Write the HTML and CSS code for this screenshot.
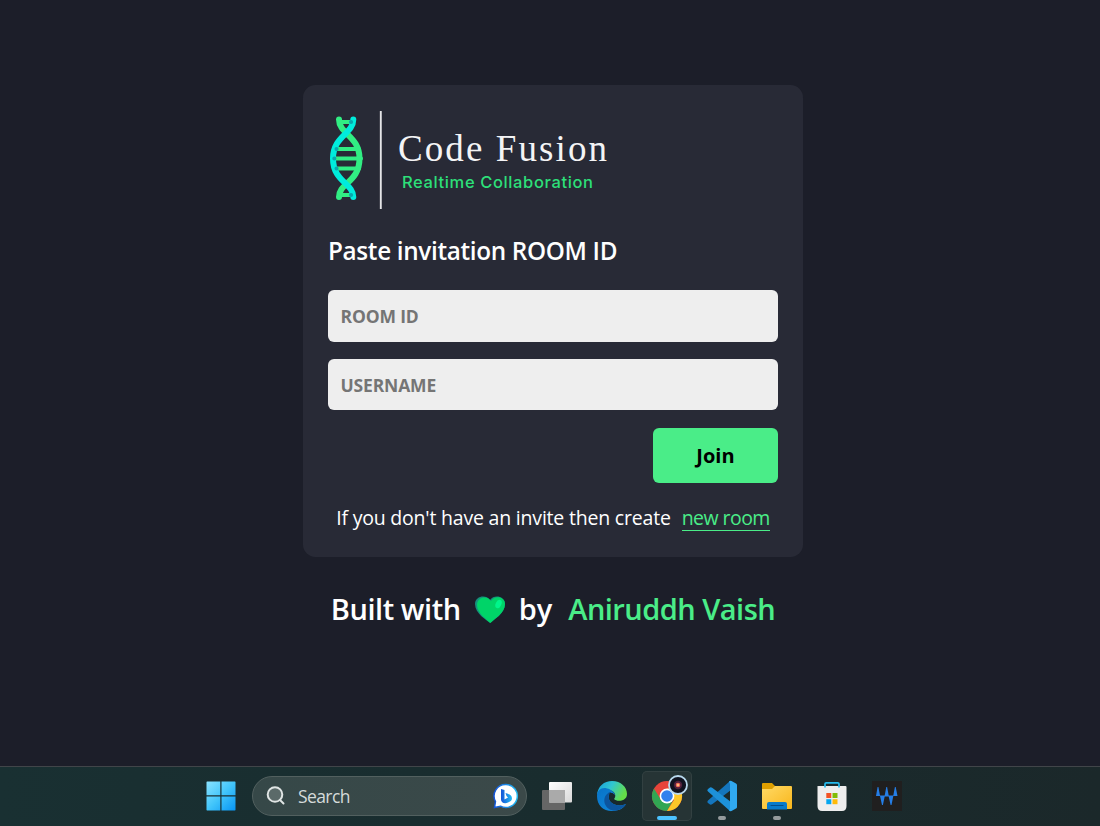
FILE: index.html
```html
<!DOCTYPE html>
<html lang="en">
<head>
<meta charset="utf-8">
<title>Code Fusion</title>
<link rel="stylesheet" href="styles.css">
</head>
<body>
<main class="home">
  <section class="card">
    <svg class="logo" width="300" height="100" viewBox="0 0 300 100" role="img" aria-label="Code Fusion Realtime Collaboration">
      <g fill="none" stroke-linecap="round">
        <path d="M12 12H25M8 39H31M6 48.500H33M8 58.500H31M12 85H25" stroke="#31ee83" stroke-width="4"/>
        <path d="M11 9.500C11 24 31.500 26 31.500 48.500C31.500 72 11 73 11 87" stroke="#31ee83" stroke-width="6"/>
        <path d="M25.300 9.500C25.300 24 5 26 5 48.500C5 72 25.300 73 25.300 87" stroke="#00ecdc" stroke-width="6"/>
        <path d="M23 12h.1M8.500 39h.1M6.300 48.500h.1M8.500 58.500h.1M23 85h.1" stroke="#08a7ad" stroke-width="4"/>
      </g>
      <path d="M52.800 1V99" stroke="#e4e5e7" stroke-width="1.900"/>
      <text class="logo-name" x="70" y="51" textLength="209">Code Fusion</text>
      <text class="logo-tag" x="74" y="78" textLength="191">Realtime Collaboration</text>
    </svg>
    <h4 class="label">Paste invitation ROOM ID</h4>
    <div class="fields">
      <input class="field" type="text" placeholder="ROOM ID">
      <input class="field" type="text" placeholder="USERNAME">
      <button class="join">Join</button>
      <p class="create"><span>If you don't have an invite then create</span><a class="new-room">new room</a></p>
    </div>
  </section>
  <footer class="credit">
    <span class="built">Built with</span>
    <svg class="heart" width="30" height="28" viewBox="0 0 30 28"><path d="M15 27C12 24 0 18 0 8C0 0 11-2 15 4C19-2 30 0 30 8C30 18 18 24 15 27Z" fill="#168f7c"/><path d="M15.500 27C12 24 2 17 2 9C2 1 12-1 16 5C19-1 30 0 30 8C30 17 19 23 15.500 27Z" fill="#00d468"/><ellipse cx="23.500" cy="8" rx="2.800" ry="4.500" transform="rotate(25 23.500 8)" fill="#00f58b"/></svg>
    <span class="by">by</span>
    <a class="author">Aniruddh Vaish</a>
  </footer>
</main>
<nav class="taskbar">
  <svg class="start" width="30" height="30" viewBox="0 0 30 30"><defs><linearGradient id="win" x2="1" y2="1"><stop stop-color="#8ae3ff"/><stop offset=".5" stop-color="#42c5fa"/><stop offset="1" stop-color="#0795f5"/></linearGradient></defs><path d="M1 .5H14.300V14.300H.5V1ZM15.500 .5H29L29.500 1V14.300H15.500ZM.5 15.500H14.300V29.500H1L.5 29ZM15.500 15.500H29.500V29L29 29.500H15.500Z" fill="url(#win)"/></svg>
  <div class="search">
    <svg width="20" height="20" viewBox="0 0 20 20" fill="none" stroke="#e0e5e4" stroke-width="2" stroke-linecap="round"><circle cx="9" cy="8.500" r="7.300" fill="#5b6a69"/><path d="M14 14L17.500 17.500"/></svg>
    <span class="search-text">Search</span>
    <svg class="bing" width="26" height="26" viewBox="0 0 26 26"><defs><linearGradient id="bing" x2="1"><stop stop-color="#1454d8"/><stop offset="1" stop-color="#22baf2"/></linearGradient></defs><path d="M13 1.500A11.500 11.500 0 1 1 7.500 23.200L1.500 24.500L2.500 18.500A11.500 11.500 0 0 1 13 1.500Z" fill="#fff" stroke="url(#bing)" stroke-width="1.500"/><path d="M8 6L11.500 7V16.500L15 14.500L13.500 13L12.500 10C16 11 19 12.500 19 15.500C19 18 17 18.500 15 19.500C12 21 8 20 8 16.500Z" fill="url(#bing)"/></svg>
  </div>
  <svg class="app" width="50" height="50" viewBox="0 0 50 50"><defs><linearGradient id="pane" x2="1" y2="1"><stop stop-color="#fff"/><stop offset="1" stop-color="#d8d8d8"/></linearGradient></defs><rect x="10" y="19" width="23" height="20" rx="1" fill="#666"/><rect x="17" y="11" width="23" height="20.500" rx="1" fill="url(#pane)"/><path d="M17 19H33V31.500H17Z" fill="#aaa"/></svg>
  <svg class="app" width="50" height="50" viewBox="0 0 50 50"><defs><linearGradient id="edgeTop" x1="0" x2="1" y2=".4"><stop stop-color="#159ddd"/><stop offset=".5" stop-color="#31c5d0"/><stop offset="1" stop-color="#64de48"/></linearGradient><linearGradient id="edgeLow" y2="1"><stop stop-color="#0873c8"/><stop offset="1" stop-color="#118bdc"/></linearGradient></defs><path d="M10 24C11 15 17 10 25 10C34 10 40 16 40 23C40 31 29 31 27 28C29 26 29 22 25 20C19 16 12 19 10 24Z" fill="url(#edgeTop)"/><path d="M10 25C10 19 15 16 20 17.500C24 18 28 22 28 24C24 20 21 24 22 28C24 34 33 36 39 33C36 38 31 40 25 40C16 40 10 34 10 25Z" fill="url(#edgeLow)"/><path d="M23 21C14 25 16 38 27 39.800C32 39.500 37 37 39 33C33 36 24 34 22 28C21 25 22 23 24 21.700Z" fill="#0c559e"/><path d="M23 21.800C26 21 28 24 26.500 28C29 31 35 31 39 28L38.500 32C31 35 24 33 22.500 28C21.800 25 22 23 23 21.800Z" fill="#18292d"/></svg>
  <div class="app active">
    <svg width="50" height="50" viewBox="0 0 50 50"><circle cx="25" cy="25" r="15" fill="#e8443a"/><path d="M12 17.500A15 15 0 0 0 25 40L31.500 28.500L19 29Z" fill="#31a653"/><path d="M25 40A15 15 0 0 0 38 17.500H25L32 29Z" fill="#fbc728"/><circle cx="25" cy="25" r="7.400" fill="#fff"/><circle cx="25" cy="25" r="5.800" fill="#3381ed"/><circle cx="36" cy="14" r="9" fill="#10121f" stroke="#b8d8ed" stroke-width="1.800"/><circle cx="36" cy="14" r="4.200" fill="#4f203d"/><circle cx="36" cy="14" r="2.300" fill="#f06c56"/><circle cx="36" cy="14" r="1" fill="#ffd08b"/></svg>
    <i class="running"></i>
  </div>
  <div class="app">
    <svg width="50" height="50" viewBox="0 0 50 50"><path d="M33 10L11 29.500Q9.500 31 11 32L13 33.500Q14 34 15.500 33L34 19Z" fill="#1476bd"/><path d="M33 40L11 20.500Q9.500 19 11 18L13 16.500Q14 16 15.500 17L34 31Z" fill="#1d91d9"/><path d="M32 10.500Q33 9.500 34.500 10L39 12.500Q40 13 40 14V36Q40 37 39 37.500L34.500 40Q33 40.500 32 39.500L33 37V13Z" fill="#30a9f0"/></svg>
    <i class="running idle"></i>
  </div>
  <div class="app">
    <svg width="50" height="50" viewBox="0 0 50 50"><defs><linearGradient id="folder" x2="1" y2="1"><stop stop-color="#ffda66"/><stop offset="1" stop-color="#f9b61b"/></linearGradient></defs><path d="M10 13Q10 12 11 12H20L23 15H39V22H10Z" fill="#dfa000"/><path d="M10 18H20L23 15H39Q40 15 40 16V37Q40 38 39 38H11Q10 38 10 37Z" fill="url(#folder)"/><path d="M15 38.500V33Q15 31 17 31H33Q35 31 35 33V38.500Z" fill="#087acb"/><path d="M19 34.500H31" stroke="#034d8c" stroke-width="1.200" stroke-linecap="round"/></svg>
    <i class="running idle"></i>
  </div>
  <svg class="app" width="50" height="50" viewBox="0 0 50 50"><path d="M10.500 15.500Q10.500 15 11.500 15H38.500Q39.500 15 39.500 16V35Q39.500 40 35 40H15Q10.500 40 10.500 35Z" fill="#eee"/><path d="M18 16.500V13Q18 11.800 19.200 11.800H30.800Q32 11.800 32 13V16.500" fill="none" stroke="#26bbee" stroke-width="1.700"/><path d="M19.300 22H24.300V27H19.300Z" fill="#f35325"/><path d="M25.500 22H30.500V27H25.500Z" fill="#81bc06"/><path d="M19.300 28.200H24.300V33.200H19.300Z" fill="#05a6f0"/><path d="M25.500 28.200H30.500V33.200H25.500Z" fill="#ffba08"/></svg>
  <svg class="app" width="50" height="50" viewBox="0 0 50 50"><path d="M10 10H40V40H10Z" fill="#201f1f"/><path d="M14 25L15.600 16H16.400L18 24.500H22.700L24.300 16H25.100L26.700 24.500H31.300L32.900 16H33.700L35.500 25H31.300L29.500 34H28.600L26.700 25.500H22.700L20.900 34H20L18 25Z" fill="#257ee7"/></svg>
</nav>
</body>
</html>
```
FILE: styles.css
```css
* { box-sizing: border-box; }
body {
  margin: 0;
  height: 826px;
  display: flex;
  flex-direction: column;
  overflow: hidden;
  background: #1c1e29;
  color: #fff;
  font-family: "Open Sans", "Noto Sans", sans-serif;
}
.home { flex: 1; display: flex; flex-direction: column; align-items: center; padding: 85px 0 0 6px; }
.card { width: 500px; height: 472px; padding: 25px; border-radius: 12.5px; background: #282a36; }
.logo { display: block; }
.logo-name { font: 37px "Liberation Serif", serif; fill: #f4f4f5; }
.logo-tag { font: 500 16.500px Inter, sans-serif; fill: #2ddf79; }
.label { margin: 24px 0 0; height: 34px; font-size: 24.300px; font-weight: 600; line-height: 34px; letter-spacing: -.33px; white-space: nowrap; }
.fields { display: flex; flex-direction: column; margin-top: 22px; }
.field { height: 52px; margin: 0 0 17px; padding: 0 12.5px; border: 0; border-radius: 6px; background: #eee; font: 700 17.500px "Open Sans", sans-serif; letter-spacing: -.15px; }
.field + .field { height: 51px; margin-bottom: 18px; }
.field::placeholder { color: #757575; opacity: 1; }
.join { align-self: flex-end; width: 125px; height: 55px; padding: 0; border: 0; border-radius: 6px; background: #4aed88; color: #000; font: 700 20px "Open Sans", sans-serif; }
.create { display: flex; justify-content: center; gap: 11px; margin: 23px 0 0; font-size: 19.500px; line-height: 24px; white-space: nowrap; letter-spacing: -.2px; }
.new-room { color: #4aed88; border-bottom: 1px solid #4aed88; letter-spacing: -.55px; }
.credit { display: flex; align-items: center; height: 42px; margin-top: 31px; font-size: 29px; font-weight: 600; line-height: 42px; white-space: nowrap; }
.built { letter-spacing: -.45px; }
.heart { margin: 2px 14px 0; }
.author { margin-left: 16px; color: #4aed88; letter-spacing: -.52px; }
.taskbar { display: flex; align-items: center; gap: 5px; height: 60px; padding: 0 0 2px 205.5px; border-top: 1px solid #414549; background: linear-gradient(90deg, #193032, #192c2e 50%, #1b282a); }
.start { margin-right: 11.5px; }
.search { display: flex; align-items: center; width: 275px; height: 40px; margin-right: 0; padding: 0 7px 0 13px; border: 1px solid #52605f; border-radius: 20px; background: linear-gradient(90deg, #364848, #3b4949); }
.search-text { margin-left: 12px; font-size: 17.500px; letter-spacing: -.6px; color: #d5dbda; }
.bing { margin-left: auto; }
.app { position: relative; width: 50px; height: 50px; flex: none; }
.app svg { display: block; }
.active { border-radius: 5px; background: #263435; box-shadow: inset 0 0 0 1px #324041; }
.running { position: absolute; left: 15px; bottom: 1px; width: 20px; height: 4px; border-radius: 2px; background: #4cc2ff; }
.idle { left: 21px; width: 8px; background: #959b9c; }
```
